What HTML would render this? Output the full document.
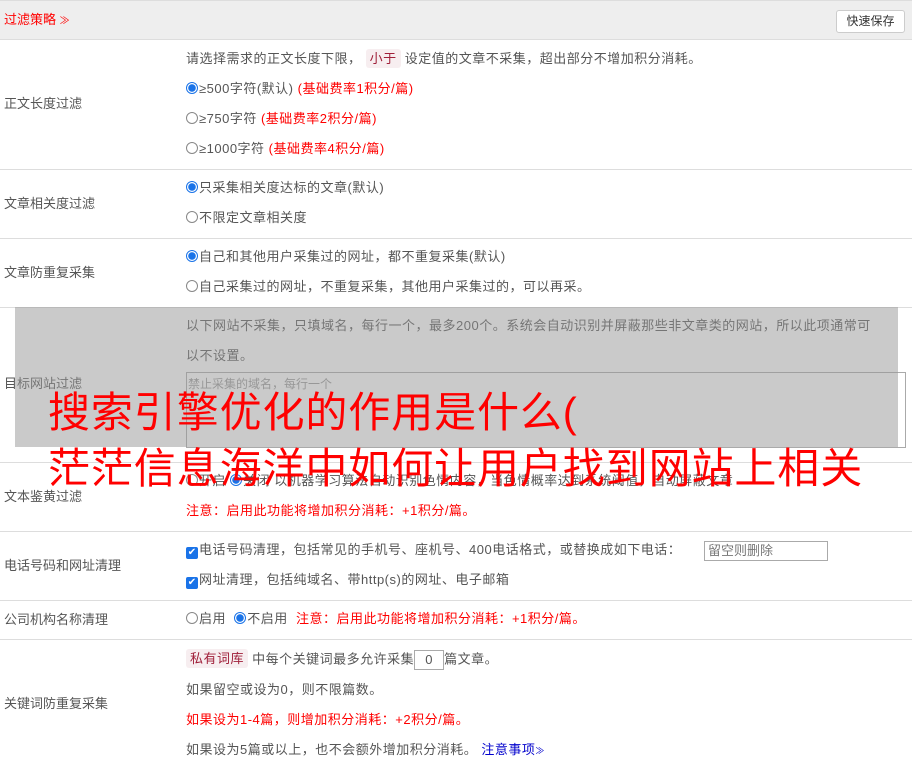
<!DOCTYPE html>
<html><head><meta charset="utf-8"><style>
*{margin:0;padding:0;box-sizing:border-box}
body{width:912px;height:768px;overflow:hidden;background:#fff;font-family:"Liberation Sans","Noto Sans CJK SC",sans-serif;font-size:13px;color:#555;position:relative}
.a{position:absolute;white-space:nowrap;line-height:18px}
.t{letter-spacing:0.5px}
.hr{position:absolute;left:0;width:912px;height:1px;background:#ddd}
.r{color:#f00}
.rd{display:inline-block;width:12px;height:12px;border:1px solid #888;border-radius:50%;vertical-align:-1px;margin-right:1px;background:#fff}
.rd.on{border-color:#1a73e8;background:radial-gradient(circle,#1a73e8 3.5px,#fff 4px)}
.cb{display:inline-block;width:12px;height:12px;background:#1a73e8;border-radius:2px;vertical-align:-1px;margin-right:1px;color:#fff;font-size:10px;line-height:12px;text-align:center;letter-spacing:0}
.tag{background:#f7eef0;color:#a0203a;padding:2px 4px;border-radius:3px}
</style></head><body>
<div style="position:absolute;left:0;top:0;width:912px;height:40px;background:#eee;border-top:1px solid #ddd;border-bottom:1px solid #ddd"></div>
<div class="a r" style="left:4px;top:11px">过滤策略 <span style="font-size:10px">≫</span></div>
<div class="a" style="left:836px;top:10px;width:69px;height:23px;background:#fff;border:1px solid #ccc;border-radius:3px;color:#333;text-align:center;line-height:21px;font-size:12px">快速保存</div>

<div class="a" style="left:4px;top:95px">正文长度过滤</div>
<div class="a t" style="left:186px;top:50px">请选择需求的正文长度下限， <span class="tag">小于</span> 设定值的文章不采集，超出部分不增加积分消耗。</div>
<div class="a t" style="left:186px;top:80px"><span class="rd on"></span>≥500字符(默认) <span class="r">(基础费率1积分/篇)</span></div>
<div class="a t" style="left:186px;top:110px"><span class="rd"></span>≥750字符 <span class="r">(基础费率2积分/篇)</span></div>
<div class="a t" style="left:186px;top:140px"><span class="rd"></span>≥1000字符 <span class="r">(基础费率4积分/篇)</span></div>
<div class="hr" style="top:169px"></div>

<div class="a" style="left:4px;top:195px">文章相关度过滤</div>
<div class="a t" style="left:186px;top:179px"><span class="rd on"></span>只采集相关度达标的文章(默认)</div>
<div class="a t" style="left:186px;top:209px"><span class="rd"></span>不限定文章相关度</div>
<div class="hr" style="top:238px"></div>

<div class="a" style="left:4px;top:264px">文章防重复采集</div>
<div class="a t" style="left:186px;top:248px"><span class="rd on"></span>自己和其他用户采集过的网址，都不重复采集(默认)</div>
<div class="a t" style="left:186px;top:278px"><span class="rd"></span>自己采集过的网址，不重复采集，其他用户采集过的，可以再采。</div>
<div class="hr" style="top:307px"></div>

<div class="a" style="left:4px;top:375px">目标网站过滤</div>
<div class="a t" style="left:186px;top:317px">以下网站不采集，只填域名，每行一个，最多200个。系统会自动识别并屏蔽那些非文章类的网站，所以此项通常可</div>
<div class="a t" style="left:186px;top:347px">以不设置。</div>
<div style="position:absolute;left:186px;top:372px;width:720px;height:76px;border:1px solid #aaa;background:#fff"></div>
<div class="a" style="left:188px;top:375px;font-size:12px;color:#999">禁止采集的域名，每行一个</div>
<div style="position:absolute;left:15px;top:307px;width:883px;height:140px;background:rgba(150,150,150,0.5)"></div>
<div class="hr" style="top:462px"></div>

<div class="a" style="left:4px;top:488px">文本鉴黄过滤</div>
<div class="a t" style="left:186px;top:472px"><span class="rd"></span>开启 <span class="rd on"></span>关闭 以机器学习算法自动识别色情内容，当色情概率达到系统阈值，自动屏蔽文章</div>
<div class="a r t" style="left:186px;top:502px">注意：启用此功能将增加积分消耗：+1积分/篇。</div>
<div class="hr" style="top:531px"></div>

<div class="a" style="left:4px;top:557px">电话号码和网址清理</div>
<div class="a t" style="left:186px;top:541px"><span class="cb">✔</span>电话号码清理，包括常见的手机号、座机号、400电话格式，或替换成如下电话：</div>
<div class="a" style="left:704px;top:541px;width:124px;height:20px;border:1px solid #aaa;padding-left:3px;line-height:18px;color:#777">留空则删除</div>
<div class="a t" style="left:186px;top:571px"><span class="cb">✔</span>网址清理，包括纯域名、带http(s)的网址、电子邮箱</div>
<div class="hr" style="top:600px"></div>

<div class="a" style="left:4px;top:611px">公司机构名称清理</div>
<div class="a t" style="left:186px;top:610px"><span class="rd"></span>启用 &nbsp;<span class="rd on"></span>不启用 &nbsp;<span class="r">注意：启用此功能将增加积分消耗：+1积分/篇。</span></div>
<div class="hr" style="top:639px"></div>

<div class="a" style="left:4px;top:695px">关键词防重复采集</div>
<div class="a t" style="left:186px;top:650px"><span class="tag">私有词库</span> 中每个关键词最多允许采集<span style="display:inline-block;width:30px;height:20px;border:1px solid #aaa;text-align:center;vertical-align:middle">0</span>篇文章。</div>
<div class="a t" style="left:186px;top:681px">如果留空或设为0，则不限篇数。</div>
<div class="a r t" style="left:186px;top:711px">如果设为1-4篇，则增加积分消耗：+2积分/篇。</div>
<div class="a t" style="left:186px;top:741px">如果设为5篇或以上，也不会额外增加积分消耗。 <span style="color:#00c">注意事项<span style="font-size:9px">≫</span></span></div>

<div class="a r" style="left:48px;top:385px;font-size:42px;line-height:56px;white-space:normal;width:860px;letter-spacing:0.9px">搜索引擎优化的作用是什么(<br>茫茫信息海洋中如何让用户找到网站上相关</div>
</body></html>
